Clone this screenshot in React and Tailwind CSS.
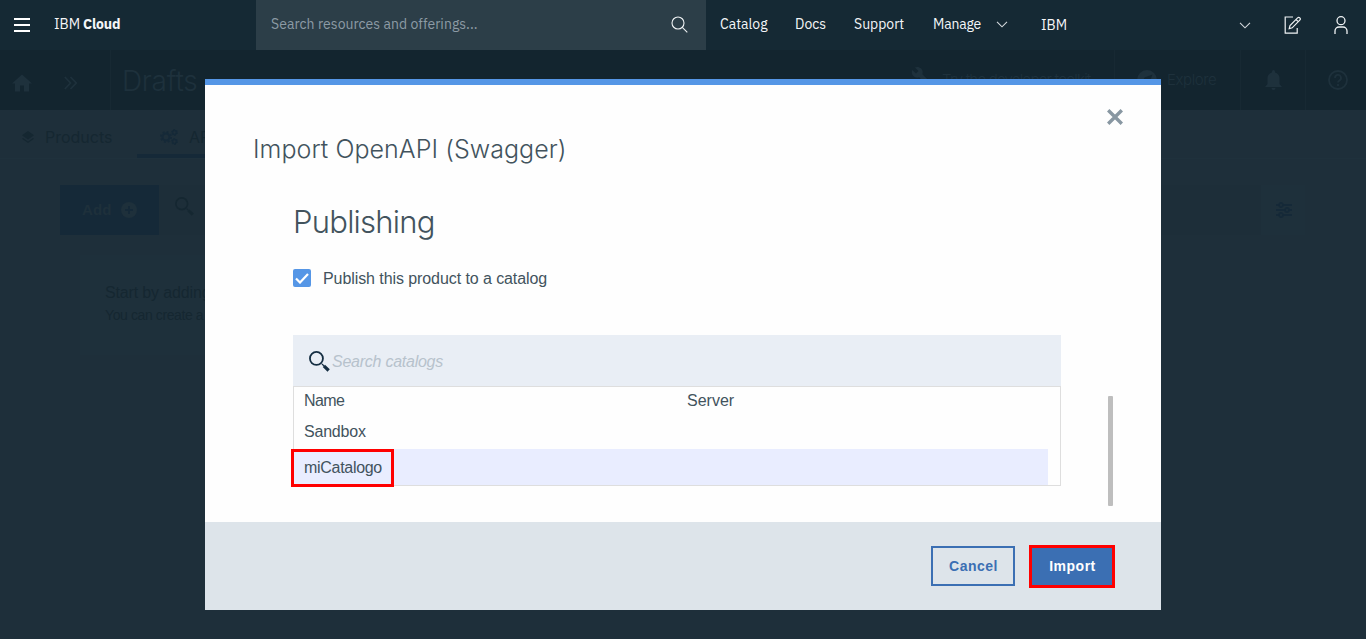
import React from "react";

const NAV = "font-['IBM_Plex_Sans','Roboto',sans-serif]";

function SearchGlyph({ className }) {
  return (
    <svg className={className} viewBox="0 0 22 22" fill="none" stroke="currentColor">
      <circle cx="7.8" cy="7.8" r="6.8" strokeWidth="1.9" />
      <path d="M13.6 13.6l2 2" strokeWidth="1.4" />
      <path d="M15.6 15.6l5 4.8" strokeWidth="3.4" />
    </svg>
  );
}

function Chevron() {
  return (
    <svg className="h-[7px] w-[12px] shrink-0" viewBox="0 0 12 7" fill="none" stroke="#d5dade" strokeWidth="1.1">
      <path d="M1 .8l5 5 5-5" />
    </svg>
  );
}

function TopBar() {
  return (
    <header className={`flex h-[50px] shrink-0 items-center bg-[#152934] text-[14px] leading-5 text-[#f4f6f8] ${NAV}`}>
      <div className="flex w-[256px] items-center pl-[14px]">
        <div className="flex flex-col gap-1 pb-px">
          <span className="h-[2px] w-4 bg-white" />
          <span className="h-[2px] w-4 bg-white" />
          <span className="h-[2px] w-4 bg-white" />
        </div>
        <div className="flex gap-1 pb-[2px] pl-6">
          <span className="w-[25px]">IBM</span>
          <span className="font-bold tracking-[-0.15px]">Cloud</span>
        </div>
      </div>
      <div className="flex h-full w-[450px] items-center justify-between bg-[#2c3e48] pr-[18px] pl-[15px] text-[#8c9ba5]">
        <span className="pb-[2px] tracking-[0.04px]">Search resources and offerings...</span>
        <svg className="mb-px h-[17px] w-[17px]" viewBox="0 0 17 17" fill="none" stroke="#f0f3f5" strokeWidth="1.1">
          <circle cx="7" cy="7" r="6" />
          <path d="M11.3 11.3l5 5" />
        </svg>
      </div>
      <nav className="flex items-center pb-[2px] pl-[14px]">
        <span className="w-[75px]">Catalog</span>
        <span className="w-[59px]">Docs</span>
        <span className="w-[79px]">Support</span>
        <span className="w-[63px] tracking-[-0.2px]">Manage</span>
        <span className="w-[45px] pt-[1px]"><Chevron /></span>
        <span className="pt-[2px]">IBM</span>
      </nav>
      <div className="ml-auto flex items-center pr-[18px] pb-px">
        <span className="pt-[2px]"><Chevron /></span>
        <svg className="ml-[33px] h-[18px] w-[18px]" viewBox="0 0 18 18" fill="none" stroke="#f0f3f5" strokeWidth="1.2">
          <path d="M9 1H1.2v16.2h12V12" />
          <path d="M5.2 12.6l.8-3L13.6 1.900a1.500 1.500 0 0 1 2.200 2.200L8.200 11.800zM12 3.500l2.200 2.200" />
        </svg>
        <svg className="ml-[32px] h-[18px] w-[14px]" viewBox="0 0 14 18" fill="none" stroke="#f0f3f5" strokeWidth="1.3">
          <circle cx="7" cy="4.700" r="4" />
          <path d="M1 18v-3a4 4 0 0 1 4-4h4a4 4 0 0 1 4 4v3" />
        </svg>
      </div>
    </header>
  );
}

function SubHeader() {
  return (
    <div className="flex h-[60px] shrink-0 bg-[#13252f] text-[#1e313c]">
      <div className="flex w-[111px] items-center border-r border-[#172933] pt-[5px] pl-3">
        <svg className="h-5 w-5" viewBox="0 0 20 17" fill="currentColor">
          <path d="M10 0L0 9h3v8h5v-6h4v6h5V9h3z" />
        </svg>
        <svg className="ml-8 h-[14px] w-[13px]" viewBox="0 0 13 14" fill="none" stroke="currentColor" strokeWidth="1.700">
          <path d="M.8 1l5.700 6-5.700 6M6.500 1l5.700 6-5.700 6" />
        </svg>
      </div>
      <div className="pt-[12px] pl-[11px] font-['Inter',sans-serif] text-[28px] leading-[38px] font-light tracking-[-0.3px]">Drafts</div>
      <div className="ml-auto flex font-['Inter',sans-serif] text-[15px] font-light">
        <div className="flex w-[204px] shrink-0 items-start border-r border-[#172933] pt-4">
          <svg className="h-5 w-5 shrink-0" viewBox="0 0 24 24" fill="currentColor">
            <path d="M22.700 19l-9.100-9.100c.9-2.300.4-5-1.500-6.900-2-2-5-2.400-7.400-1.300L9 6 6 9 1.600 4.700C.4 7.100.9 10.100 2.900 12.100c1.900 1.900 4.600 2.400 6.900 1.500l9.100 9.100c.4.4 1 .4 1.400 0l2.300-2.300c.5-.4.5-1.100.1-1.400z" />
          </svg>
          <span className="ml-[11px] leading-[27px] tracking-[-0.8px] whitespace-nowrap">Try the developer toolkit</span>
        </div>
        <div className="flex w-[126px] items-center border-r border-[#172933] pl-[22px]">
          <svg className="h-5 w-5" viewBox="0 0 20 20">
            <circle cx="10" cy="10" r="10" fill="currentColor" />
            <path d="M15.500 4.500l-3 8-8 3 3-8z" fill="#13252f" />
          </svg>
          <span className="ml-[10px] tracking-[-0.4px]">Explore</span>
        </div>
        <div className="flex w-[65px] items-center justify-center border-r border-[#172933]">
          <svg className="h-5 w-[17px]" viewBox="0 0 17 20" fill="currentColor">
            <path d="M0 17l2.500-3V8c0-3 2-5 4.500-5.600V1.500a1.500 1.500 0 0 1 3 0v.9C12.500 3 14.500 5 14.500 8v6L17 17zM6.500 18h4a2 2 0 0 1-4 0z" />
          </svg>
        </div>
        <div className="flex w-[60px] items-center pl-[22px]">
          <svg className="h-5 w-5" viewBox="0 0 20 20" fill="none" stroke="currentColor" strokeWidth="1.800">
            <circle cx="10" cy="10" r="9" />
            <path d="M7 8a3 3 0 1 1 4.300 2.600c-1 .5-1.300 1-1.300 2M10 14v2" />
          </svg>
        </div>
      </div>
    </div>
  );
}

function Gear({ className }) {
  return (
    <svg className={className} viewBox="0 0 18 16" fill="none" stroke="currentColor">
      <circle cx="6" cy="8" r="3.500" strokeWidth="2" />
      <circle cx="6" cy="8" r="5.200" strokeWidth="1.600" strokeDasharray="2 2.080" />
      <circle cx="14.500" cy="3.500" r="1.900" strokeWidth="1.500" />
      <circle cx="14.500" cy="3.500" r="3" strokeWidth="1" strokeDasharray="1.570 1.570" />
      <circle cx="14.500" cy="12.500" r="1.900" strokeWidth="1.500" />
      <circle cx="14.500" cy="12.500" r="3" strokeWidth="1" strokeDasharray="1.570 1.570" />
    </svg>
  );
}

function Page() {
  return (
    <main className="flex flex-1 flex-col font-['Liberation_Sans',sans-serif] text-[#152731]">
      <div className="flex h-[49px] border-b border-[#1f313c] font-['Inter',sans-serif] text-[16px]">
        <div className="flex w-[137px] items-center pt-[6px] pl-[22px]">
          <svg className="h-3 w-3" viewBox="0 0 12 12" fill="currentColor">
            <path d="M6 0l6 4.300-6 4.300-6-4.300z" />
            <path d="M1 7l5 3.600L11 7l1 .8L6 12 0 7.800z" />
          </svg>
          <span className="ml-[11px]">Products</span>
        </div>
        <div className="flex w-[110px] items-center border-b-4 border-[#152938] pt-[10px] pl-[23px]">
          <Gear className="h-4 w-[18px] text-[#152938]" />
          <span className="ml-[11px]">APIs</span>
        </div>
      </div>
      <div className="mt-[26px] flex h-[50px] pl-[60px]">
        <div className="flex w-[99px] items-center bg-[#152938] pl-[22px] text-[15px] font-bold tracking-[0.1px] text-[#1e303b]">
          Add
          <svg className="ml-[10px] h-4 w-4" viewBox="0 0 16 16">
            <circle cx="8" cy="8" r="8" fill="currentColor" />
            <path d="M8 4v8M4 8h8" stroke="#152938" strokeWidth="2" />
          </svg>
        </div>
        <div className="flex w-[1102px] bg-[#1d2e39] pt-3 pl-4">
          <SearchGlyph className="h-[19px] w-[19px]" />
        </div>
        <div className="flex w-[44px] items-center justify-center bg-[#1e303b] pl-[2px] text-[#152938]">
          <svg className="h-4 w-4" viewBox="0 0 16 16" fill="none" stroke="currentColor" strokeWidth="1.800">
            <path d="M0 3h3M7 3h9M0 8h9M13 8h3M0 13h3M7 13h9" />
            <circle cx="5" cy="3" r="2" /><circle cx="11" cy="8" r="2" /><circle cx="5" cy="13" r="2" />
          </svg>
        </div>
      </div>
      <div className="mt-[20px] ml-[80px] h-[100px] w-[900px] bg-[#1e303b] pt-[27px] pl-[25px]">
        <p className="text-[16px] leading-[22px] tracking-[-0.15px]">Start by adding an API or a product</p>
        <p className="text-[14px] leading-[23px] tracking-[-0.4px]">You can create a new API or import an existing one</p>
      </div>
    </main>
  );
}

function Modal() {
  return (
    <section className="absolute top-[79px] left-[205px] flex h-[531px] w-[956px] flex-col border-t-[6px] border-[#5596e6] bg-[#fefefe] font-['Liberation_Sans',sans-serif] text-[16px] text-[#42535d]">
      <div className="flex h-[437px] flex-col pl-12">
        <div className="flex h-[106px] justify-between pr-[38px]">
          <h1 className="pt-[46px] font-['Inter',sans-serif] text-[25px] leading-9 font-light tracking-[0.05px]">Import OpenAPI (Swagger)</h1>
          <svg className="mt-[24px] h-4 w-4" viewBox="0 0 16 16" stroke="#8897a2" strokeWidth="3.400">
            <path d="M1.200 1.200l13.600 13.600M14.800 1.200L1.200 14.800" />
          </svg>
        </div>
        <div className="pl-10">
          <h2 className="pt-[10px] font-['Inter',sans-serif] text-[31px] leading-[42px] font-light tracking-[-0.75px]">Publishing</h2>
          <div className="mt-[25px] flex h-5 items-center">
            <span className="flex h-[18px] w-[18px] items-center justify-center rounded-[2px] bg-[#5596e6]">
              <svg className="h-[11px] w-[14px]" viewBox="0 0 14 11" fill="none" stroke="#fff" strokeWidth="2.200">
                <path d="M1 5.500l4 4L13 1" />
              </svg>
            </span>
            <span className="ml-3 pt-[2px] tracking-[-0.08px]">Publish this product to a catalog</span>
          </div>
          <div className="mt-[47px] flex">
            <div className="w-[768px]">
              <div className="flex h-[51px] items-center bg-[#e9eef5] pt-[2px] pl-4 text-[#b7c2cc]">
                <SearchGlyph className="h-[21px] w-[21px] text-[#152e42]" />
                <span className="ml-[2px] tracking-[-0.25px] italic">Search catalogs</span>
              </div>
              <div className="h-[100px] border border-[#dedede] leading-6">
                <div className="flex h-[29px] pt-[2px] pl-[10px]">
                  <span className="w-[383px] tracking-[-0.6px]">Name</span>
                  <span>Server</span>
                </div>
                <div className="h-[33px] pt-1 pl-[10px] tracking-[-0.2px]">Sandbox</div>
                <div className="-ml-[3px] flex h-[36px]">
                  <div className="z-10 flex h-[38px] w-[103px] items-center border-[3px] border-[#f00] bg-[#e9edff] pl-[10px] tracking-[-0.3px]">miCatalogo</div>
                  <div className="h-[36px] w-[654px] bg-[#e9edff]" />
                </div>
              </div>
            </div>
            <div className="mt-[61px] ml-[47px] h-[110px] w-[5px] rounded-[1px] bg-[#bebebe]" />
          </div>
        </div>
      </div>
      <footer className="flex h-[88px] items-start justify-end bg-[#dde4ea] pt-[23px] pr-[46px] font-['Liberation_Sans',sans-serif] text-[14px] font-bold tracking-[0.5px]">
        <button className="mt-px mr-[14px] h-10 w-[84px] border-2 border-[#3b6fb3] pl-px text-[#3b6fb3]">Cancel</button>
        <button className="h-[43px] w-[86px] border-[3px] border-[#f00] bg-[#3b6fb3] pl-px text-white">Import</button>
      </footer>
    </section>
  );
}

export default function App() {
  return (
    <div className="relative flex h-[639px] w-[1366px] flex-col overflow-hidden bg-[#1e2f3a]">
      <TopBar />
      <SubHeader />
      <Page />
      <Modal />
    </div>
  );
}
